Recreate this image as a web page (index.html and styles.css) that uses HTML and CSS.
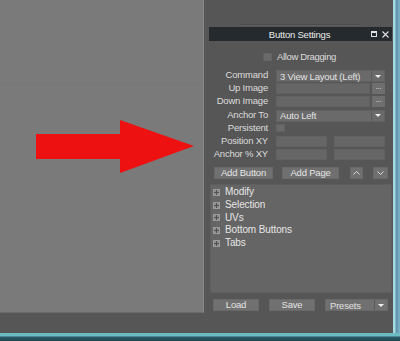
FILE: index.html
```html
<!DOCTYPE html>
<html lang="en">
  <head>
    <meta charset="UTF-8" />
    <meta name="viewport" content="width=device-width, initial-scale=1.0" />
    <title>Button Settings</title>
    <link rel="stylesheet" href="styles.css">
  </head>
  <body>
    <div class="workspace">
      <div class="left">
        <div class="viewport">
          <div class="grid-line"></div>
          <svg class="arrow" width="160" height="54" viewBox="0 0 160 54">
            <polygon points="1,14 85,14 85,0 159,26 85,53 85,39 1,39" fill="#ee1111" />
          </svg>
        </div>
      </div>

      <div class="panel">
        <div class="separator"></div>
        <div class="titlebar">
          <span class="title">Button Settings</span>
          <span class="title-icons">
            <svg width="6" height="6" viewBox="0 0 6 6"><rect x="0.5" y="0.5" width="5" height="5" fill="none" stroke="#e0e0e0" stroke-width="1" /><rect x="0.5" y="0.5" width="5" height="1.5" fill="#e0e0e0" /></svg>
            <svg width="7" height="7" viewBox="0 0 7 7"><path d="M0.5 0.5 L6.5 6.5 M6.5 0.5 L0.5 6.5" stroke="#e0e0e0" stroke-width="1.1" /></svg>
          </span>
        </div>

        <div class="allow">
          <span class="check"></span>
          <span>Allow Dragging</span>
        </div>

        <div class="form">
          <label>Command</label>
          <div class="select wide"><span>3 View Layout (Left)</span><i class="drop"></i></div>

          <label>Up Image</label>
          <div class="pair"><div class="field file"></div><div class="dots">...</div></div>

          <label>Down Image</label>
          <div class="pair"><div class="field file"></div><div class="dots">...</div></div>

          <label>Anchor To</label>
          <div class="select wide"><span>Auto Left</span><i class="drop"></i></div>

          <label>Persistent</label>
          <div><span class="check small"></span></div>

          <label>Position XY</label>
          <div class="pair xy"><div class="field half"></div><div class="field half"></div></div>

          <label>Anchor % XY</label>
          <div class="pair xy"><div class="field half"></div><div class="field half"></div></div>
        </div>

        <div class="actions">
          <button class="btn add-button">Add Button</button>
          <button class="btn add-page">Add Page</button>
          <button class="btn arrow-btn up">
            <svg width="7" height="4" viewBox="0 0 7 4"><path d="M0.5 3.5 L3.5 0.5 L6.5 3.5" fill="none" stroke="#dcdcdc" stroke-width="1" /></svg>
          </button>
          <button class="btn arrow-btn down">
            <svg width="7" height="4" viewBox="0 0 7 4"><path d="M0.5 0.5 L3.5 3.5 L6.5 0.5" fill="none" stroke="#dcdcdc" stroke-width="1" /></svg>
          </button>
        </div>

        <ul class="tree">
          <li><span class="plus"></span>Modify</li>
          <li><span class="plus"></span>Selection</li>
          <li><span class="plus"></span>UVs</li>
          <li><span class="plus"></span>Bottom Buttons</li>
          <li><span class="plus"></span>Tabs</li>
        </ul>

        <div class="footer">
          <button class="btn load">Load</button>
          <button class="btn save">Save</button>
          <div class="select presets"><span>Presets</span><i class="drop"></i></div>
        </div>
      </div>

      <div class="frame"></div>
    </div>
    <div class="taskbar"></div>
  </body>
</html>
```

FILE: styles.css
```css
body {
  margin: 0;
  width: 400px;
  height: 341px;
  overflow: hidden;
  background: #565656;
  font-family: "Liberation Sans", Arial, sans-serif;
  font-size: 9px;
  letter-spacing: -0.2px;
  color: #dcdcdc;
}
.workspace {
  display: flex;
  height: 333px;
}
.left {
  width: 204px;
}
.viewport {
  box-sizing: border-box;
  width: 204px;
  height: 313px;
  background: #7a7a7a;
  border-right: 1px solid #8a8a8a;
  border-bottom: 1px solid #6a6a6a;
  padding-top: 83px;
}
.grid-line {
  border-top: 1px dotted #737373;
}
.arrow {
  display: block;
  margin: 36px 0 0 35px;
}

/* side panel */
.panel {
  box-sizing: border-box;
  width: 189px;
  padding: 24px 1px 0 5px;
  display: flex;
  flex-direction: column;
}
.separator {
  width: 120px;
  height: 1px;
  margin-left: 31px;
  background: #4a4a4a;
  box-shadow: 0 1px 0 #5f5f5f;
}
.titlebar {
  margin-top: 2px;
  height: 14px;
  background: #252a2f;
  display: flex;
  align-items: center;
  position: relative;
}
.title {
  flex: 1;
  text-align: center;
  color: #eaeaea;
  font-size: 9.5px;
  padding-right: 2px;
}
.title-icons {
  position: absolute;
  right: 3px;
  top: 4px;
  display: flex;
  gap: 5px;
}
.title-icons svg {
  display: block;
}
.allow {
  margin-top: 11px;
  height: 9px;
  padding-left: 54px;
  display: flex;
  align-items: center;
  gap: 5px;
  font-size: 9.5px;
  letter-spacing: -0.35px;
}
.check {
  display: inline-block;
  width: 9px;
  height: 8px;
  background: #6a6a6a;
  border: 1px solid #626262;
  box-sizing: border-box;
}
.check.small {
  margin-top: 1px;
}

.form {
  margin-top: 9px;
  display: grid;
  grid-template-columns: 59px 109px;
  grid-auto-rows: 12px;
  row-gap: 1.2px;
  column-gap: 8px;
}
.form label {
  text-align: right;
  line-height: 10px;
  font-size: 9.5px;
  white-space: nowrap;
}
.select {
  box-sizing: border-box;
  height: 12px;
  background: #6a6a6a;
  border: 1px solid #626262;
  display: flex;
  align-items: center;
  padding-left: 3px;
  color: #e2e2e2;
  font-size: 9.5px;
}
.select span {
  flex: 1;
  white-space: nowrap;
}
.drop {
  width: 12px;
  height: 100%;
  border-left: 1px solid #5a5a5a;
  display: flex;
  align-items: center;
  justify-content: center;
}
.drop::after {
  content: "";
  border-left: 3px solid transparent;
  border-right: 3px solid transparent;
  border-top: 3px solid #f0f0f0;
}
.pair {
  display: flex;
  gap: 2px;
}
.pair.xy {
  gap: 7px;
}
.field {
  box-sizing: border-box;
  height: 11px;
  background: #666;
  border: 1px solid #616161;
}
.field.file {
  width: 94px;
}
.field.half {
  width: 51px;
}
.dots {
  width: 13px;
  height: 11px;
  background: #6e6e6e;
  color: #e0e0e0;
  font-size: 8px;
  line-height: 8px;
  text-align: center;
}

.btn {
  box-sizing: border-box;
  height: 12px;
  padding: 0;
  border: 1px solid #696969;
  background: #707070;
  color: #e4e4e4;
  font-family: inherit;
  font-size: 9.5px;
  letter-spacing: -0.2px;
  line-height: 10px;
  display: flex;
  align-items: center;
  justify-content: center;
}
.actions {
  margin-top: 6px;
  padding-left: 5px;
  display: flex;
}
.add-button {
  width: 59px;
}
.add-page {
  width: 57px;
  margin-left: 9px;
}
.arrow-btn.up {
  width: 13px;
  margin-left: 11px;
}
.arrow-btn.down {
  width: 15px;
  margin-left: 10px;
}

.tree {
  box-sizing: border-box;
  list-style: none;
  margin: 5px 0 0 1px;
  padding: 1px 0 0 2px;
  height: 109px;
  background: #656565;
  border: 1px solid #5e5e5e;
  font-size: 10px;
  letter-spacing: -0.1px;
  color: #e6e6e6;
}
.tree li {
  height: 12.7px;
  line-height: 12.7px;
  display: flex;
  align-items: center;
}
.plus {
  box-sizing: border-box;
  width: 7px;
  height: 7px;
  margin-right: 5px;
  background: #8e8e8e;
  border: 1px solid #9c9c9c;
  position: relative;
}
.plus::before,
.plus::after {
  content: "";
  position: absolute;
  background: #505050;
}
.plus::before {
  left: 0;
  top: 2px;
  width: 5px;
  height: 1px;
}
.plus::after {
  left: 2px;
  top: 0;
  width: 1px;
  height: 5px;
}

.footer {
  margin-top: 6px;
  padding-left: 4px;
  display: flex;
  gap: 10px;
}
.load,
.save {
  width: 46px;
}
.presets {
  width: 63px;
  background: #707070;
  border-color: #696969;
  padding-left: 4px;
}

.frame {
  width: 7px;
  background: linear-gradient(to right, #a4dce4 0, #a4dce4 2px, #5d90a8 3px, #7fb4ca 7px);
}
.taskbar {
  height: 8px;
  background: linear-gradient(to bottom, #6cbcc4 0, #6cbcc4 3px, #2c5a66 4px, #1f4650 8px);
}
```
